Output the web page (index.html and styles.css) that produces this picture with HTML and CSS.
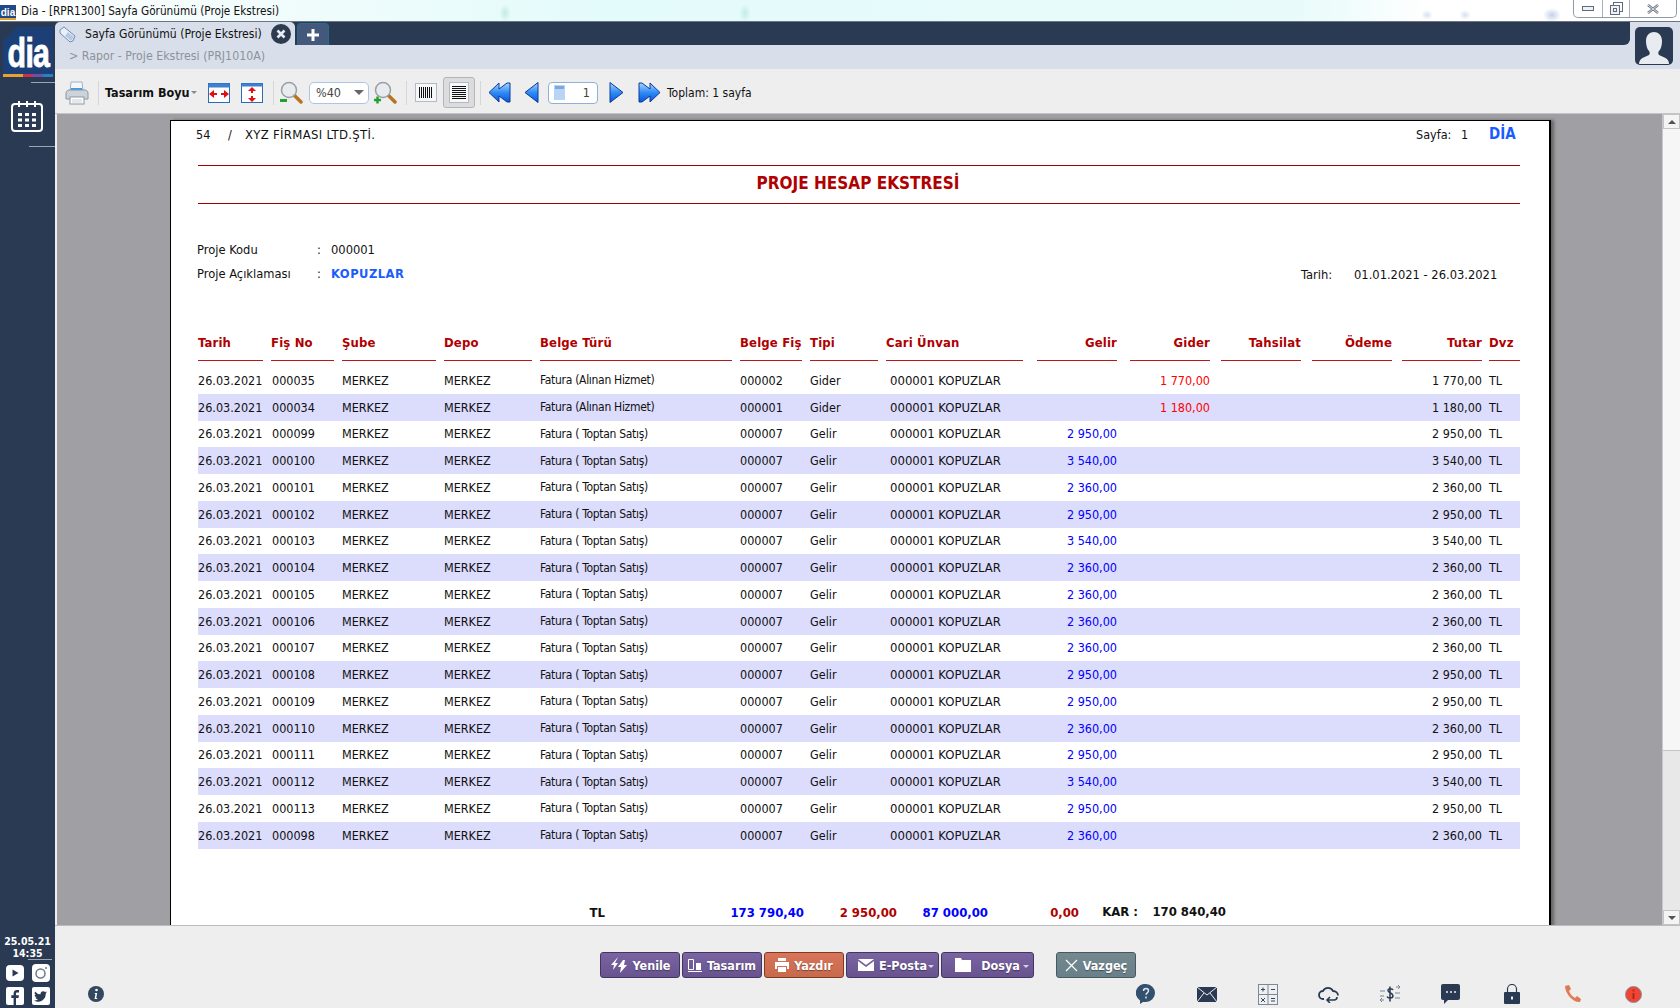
FILE: index.html
```html
<!DOCTYPE html>
<html lang="tr">
<head>
    <meta charset="UTF-8">
    <title>Dia - [RPR1300] Sayfa Görünümü (Proje Ekstresi)</title>
    <link rel="stylesheet" href="styles.css">
</head>
<body>
    <!-- TITLE BAR -->
    <div class="title-bar">
        <span class="app-icon">dia</span>
        <span class="title-text">Dia - [RPR1300] Sayfa Görünümü (Proje Ekstresi)</span>
        <div class="win-controls">
            <span class="win-btn win-min"><svg width="12" height="6"><rect x="0.5" y="0.5" width="11" height="4" fill="#eef2f6" stroke="#5d6b7a"/></svg></span>
            <span class="win-btn win-max"><svg width="13" height="13"><rect x="3.5" y="0.5" width="9" height="9" fill="none" stroke="#5d6b7a"/><rect x="0.5" y="3.5" width="9" height="9" fill="#eef2f6" stroke="#5d6b7a"/><rect x="3.5" y="6.5" width="3" height="3" fill="none" stroke="#5d6b7a"/></svg></span>
            <span class="win-btn win-close"><svg width="12" height="10"><path d="M1 1l10 8M11 1L1 9" stroke="#6a7582" stroke-width="2.4"/><path d="M1 1l10 8M11 1L1 9" stroke="#f2f4f6" stroke-width="0.8"/></svg></span>
        </div>
    </div>

    <div class="app">
        <!-- SIDEBAR -->
        <aside class="sidebar">
            <div class="logo">
                <span class="logo-text">dia</span>
            </div>
            <div class="logo-strip"></div>
            <div class="side-line side-line-top"></div>
            <svg class="calendar" width="32" height="32" viewBox="0 0 32 32">
                <rect x="1" y="4" width="30" height="27" rx="3" fill="none" stroke="#fff" stroke-width="2"/>
                <path d="M8 1v6M16 1v6M24 1v6" stroke="#fff" stroke-width="2"/>
                <path d="M7 13h4v3H7zM14 13h4v3h-4zM21 13h4v3h-4zM7 18.500h4v3H7zM14 18.500h4v3h-4zM21 18.500h4v3h-4zM7 24h4v3H7zM14 24h4v3h-4zM21 24h4v3h-4z" fill="#fff"/>
            </svg>
            <div class="side-line side-line-mid"></div>
            <div class="side-bottom">
                <div class="clock">25.05.21<br>14:35</div>
                <div class="side-line side-line-clock"></div>
                <div class="social">
                    <svg width="18" height="16" viewBox="0 0 18 16"><rect width="18" height="16" rx="4" fill="#fff"/><path d="M6.500 4.500v7l6-3.500z" fill="#293a52"/></svg>
                    <svg width="18" height="18" viewBox="0 0 18 18"><rect width="18" height="18" rx="4" fill="#fff"/><circle cx="8.500" cy="9.500" r="4.500" fill="none" stroke="#6b7a8c" stroke-width="1.500"/><circle cx="14" cy="4" r="1" fill="#6b7a8c"/></svg>
                    <svg width="18" height="18" viewBox="0 0 18 18"><rect width="18" height="18" rx="2" fill="#fff"/><path d="M10 18v-7h2.500l.4-2.700H10V6.800c0-.8.3-1.300 1.300-1.300H13V3.100c-.4-.1-1.200-.1-2-.1-2 0-3.400 1.200-3.400 3.400v1.900H5.300V11h2.300v7z" fill="#293a52"/></svg>
                    <svg width="18" height="18" viewBox="0 0 18 18"><rect width="18" height="18" rx="2" fill="#fff"/><path d="M15 5.200c-.5.200-1 .4-1.500.4.500-.3 1-.8 1.200-1.400-.5.300-1.100.5-1.700.7A2.700 2.700 0 0 0 8.500 7.300 7.500 7.500 0 0 1 3 4.500a2.700 2.700 0 0 0 .8 3.600c-.4 0-.8-.1-1.200-.3 0 1.300.9 2.400 2.100 2.700-.4.100-.8.100-1.200 0 .3 1.100 1.300 1.800 2.500 1.900A5.400 5.400 0 0 1 2 13.500 7.600 7.600 0 0 0 13.700 6.800c.5-.4.900-1 1.300-1.600z" fill="#293a52"/></svg>
                </div>
            </div>
        </aside>

        <div class="workspace">
            <!-- TAB STRIP -->
            <div class="tab-row">
                <div class="tab-strip">
                    <div class="tab">
                        <svg class="tab-icon" width="17" height="17" viewBox="0 0 17 17"><path d="M5 1l11 9-2 5-3 1L1 7V4z" fill="#eaf0f8" stroke="#6f8ab5" stroke-linejoin="round"/><path d="M9 6l6 5-3 4-6-5z" fill="#b9c9e2"/></svg>
                        <span class="tab-label">Sayfa Görünümü (Proje Ekstresi)</span>
                        <svg class="tab-close" width="20" height="20" viewBox="0 0 20 20"><circle cx="10" cy="10" r="10" fill="#2c3b4f"/><path d="M6.500 6.500l7 7M13.500 6.500l-7 7" stroke="#e8ecf2" stroke-width="2.600"/></svg>
                    </div>
                    <div class="tab-add">
                        <svg width="14" height="14" viewBox="0 0 14 14"><path d="M7 1v12M1 7h12" stroke="#fff" stroke-width="3"/></svg>
                    </div>
                </div>
                <div class="profile">
                    <svg width="38" height="38" viewBox="0 0 38 38"><rect width="38" height="38" rx="5" fill="#293a52"/><path d="M4 37c0-6 6-7 10-9 1-1 1-3 0-4-2-2-3-6-3-10 0-6 4-9 8-9s8 3 8 9c0 4-1 8-3 10-1 1-1 3 0 4 4 2 10 3 10 9z" fill="#e8ecf0"/></svg>
                </div>
            </div>
            <div class="breadcrumb">&gt; Rapor - Proje Ekstresi (PRJ1010A)</div>

            <!-- TOOLBAR -->
            <div class="toolbar">
                <svg class="tool-print" width="24" height="24" viewBox="0 0 24 24"><path d="M6 1h11l1 9H5z" fill="#f4f8fc" stroke="#9fb0c4"/><path d="M6 7h11l1 4H5z" fill="#3f9ae8"/><path d="M1 12c0-2 2-3 3-3h16c1 0 3 1 3 3v6H1z" fill="#cdd3da" stroke="#8c96a3"/><rect x="5" y="16" width="14" height="7" fill="#fff" stroke="#8c96a3"/><path d="M7 19h10M7 21h10" stroke="#c9d0d8"/></svg>
                <span class="tool-sep tool-sep-1"></span>
                <span class="design-label">Tasarım Boyu</span>
                <span class="caret"></span>
                <svg class="tool-fit-w" width="22" height="20" viewBox="0 0 22 20"><rect x="0.500" y="0.500" width="21" height="19" fill="#fff" stroke="#2b6cb8"/><rect x="0.500" y="0.500" width="21" height="4" fill="#3f7fd0"/><path d="M1 11l5-4v8zM21 11l-5-4v8z" fill="#e01010"/><path d="M6 10h3v2H6zM13 10h3v2h-3z" fill="#e01010"/></svg>
                <svg class="tool-fit-h" width="22" height="20" viewBox="0 0 22 20"><rect x="0.500" y="0.500" width="21" height="19" fill="#fff" stroke="#2b6cb8"/><rect x="0.500" y="0.500" width="21" height="3" fill="#3f7fd0"/><path d="M11 4l4 4H7zM11 19l4-4H7z" fill="#e01010"/><path d="M10 8h2v2h-2zM10 13h2v2h-2z" fill="#e01010"/></svg>
                <span class="tool-sep tool-sep-2"></span>
                <svg class="tool-zoom-out" width="23" height="23" viewBox="0 0 23 23"><path d="M13 13l8 8" stroke="#b8741f" stroke-width="3.500" stroke-linecap="round"/><circle cx="9" cy="9" r="7.500" fill="#e8ecef" stroke="#9aa0a6" stroke-width="1.500"/><rect x="0" y="18" width="7" height="3" fill="#22a030"/></svg>
                <div class="zoom-select">
                    <span>%40</span>
                    <span class="select-arrow"></span>
                </div>
                <svg class="tool-zoom-in" width="23" height="23" viewBox="0 0 23 23"><path d="M13 13l8 8" stroke="#b8741f" stroke-width="3.500" stroke-linecap="round"/><circle cx="9" cy="9" r="7.500" fill="#e8ecef" stroke="#9aa0a6" stroke-width="1.500"/><path d="M0 19h7M3.500 15.500v7" stroke="#22a030" stroke-width="2.400"/></svg>
                <span class="tool-sep tool-sep-3"></span>
                <svg class="tool-bars" width="22" height="19" viewBox="0 0 22 19"><rect x="0.500" y="0.500" width="21" height="18" fill="#f6f7f9" stroke="#b4bac2"/><path d="M4.500 4v11M6.500 4v11M8.500 4v11M10.500 4v11M12.500 4v11M14.500 4v11M16.500 4v11" stroke="#111"/></svg>
                <div class="tool-active">
                    <svg width="20" height="21" viewBox="0 0 20 21"><rect x="0.500" y="0.500" width="19" height="20" fill="#f6f7f9" stroke="#b4bac2"/><path d="M3 4.500h14M3 6.500h14M3 8.500h14M3 10.500h14M3 12.500h14M3 14.500h14M3 16.500h14" stroke="#111"/></svg>
                </div>
                <span class="tool-sep tool-sep-4"></span>
                <svg class="nav-first" width="23" height="23" viewBox="0 0 23 23"><defs><linearGradient id="navBlue" x1="0" y1="0" x2="0" y2="1"><stop offset="0" stop-color="#a8d4ff"/><stop offset="0.500" stop-color="#2f8cf5"/><stop offset="1" stop-color="#0a55d8"/></linearGradient></defs><path d="M11 2L1 11.500 11 21V15l8 6h3V2h-3l-8 6z" fill="url(#navBlue)" stroke="#0b3a9c" stroke-linejoin="round"/></svg>
                <svg class="nav-prev" width="16" height="23" viewBox="0 0 16 23"><path d="M14 1.500v20L1 11.500z" fill="url(#navBlue)" stroke="#0b3a9c" stroke-linejoin="round"/></svg>
                <div class="page-input">
                    <svg width="11" height="15" viewBox="0 0 11 15"><rect width="11" height="15" fill="#b9d4f4"/><rect x="1" y="1" width="9" height="3" fill="#7ea8da"/></svg>
                    <span>1</span>
                </div>
                <svg class="nav-next" width="16" height="23" viewBox="0 0 16 23"><path d="M2 1.500v20l13-10z" fill="url(#navBlue)" stroke="#0b3a9c" stroke-linejoin="round"/></svg>
                <svg class="nav-last" width="23" height="23" viewBox="0 0 23 23"><path d="M12 2l10 9.500L12 21V15l-8 6H1V2h3l8 6z" fill="url(#navBlue)" stroke="#0b3a9c" stroke-linejoin="round"/></svg>
                <span class="total-pages">Toplam: 1 sayfa</span>
            </div>

            <!-- REPORT VIEWER -->
            <div class="viewer">
                <div class="canvas">
                    <div class="page">
                        <div class="page-head">
                            <span class="head-no">54</span>
                            <span class="head-slash">/</span>
                            <span class="head-firm">XYZ FİRMASI LTD.ŞTİ.</span>
                            <span class="head-sayfa">Sayfa:</span>
                            <span class="head-num">1</span>
                            <span class="head-dia">DİA</span>
                        </div>
                        <h1 class="report-title">PROJE HESAP EKSTRESİ</h1>

                        <div class="info-row">
                            <span class="info-label">Proje Kodu</span>
                            <span class="info-colon">:</span>
                            <span>000001</span>
                        </div>
                        <div class="info-row">
                            <span class="info-label">Proje Açıklaması</span>
                            <span class="info-colon">:</span>
                            <span class="info-strong">KOPUZLAR</span>
                            <span class="info-date-label">Tarih:</span>
                            <span class="info-date">01.01.2021 - 26.03.2021</span>
                        </div>

                        <div class="report-head">
                            <span>Tarih</span>
                            <span>Fiş No</span>
                            <span>Şube</span>
                            <span>Depo</span>
                            <span>Belge Türü</span>
                            <span>Belge Fiş</span>
                            <span>Tipi</span>
                            <span class="head-cari">Cari Ünvan</span>
                            <span class="num">Gelir</span>
                            <span class="num">Gider</span>
                            <span class="num">Tahsilat</span>
                            <span class="num">Ödeme</span>
                            <span class="num">Tutar</span>
                            <span class="head-dvz">Dvz</span>
                        </div>

                        <div class="report-row"><span>26.03.2021</span><span class="fis">000035</span><span>MERKEZ</span><span>MERKEZ</span><span class="doc">Fatura (Alınan Hizmet)</span><span>000002</span><span>Gider</span><span class="cari">000001 KOPUZLAR</span><span></span><span class="num expense">1 770,00</span><span></span><span></span><span class="num">1 770,00</span><span class="dvz">TL</span></div>
                        <div class="report-row"><span>26.03.2021</span><span class="fis">000034</span><span>MERKEZ</span><span>MERKEZ</span><span class="doc">Fatura (Alınan Hizmet)</span><span>000001</span><span>Gider</span><span class="cari">000001 KOPUZLAR</span><span></span><span class="num expense">1 180,00</span><span></span><span></span><span class="num">1 180,00</span><span class="dvz">TL</span></div>
                        <div class="report-row"><span>26.03.2021</span><span class="fis">000099</span><span>MERKEZ</span><span>MERKEZ</span><span class="doc">Fatura ( Toptan Satış)</span><span>000007</span><span>Gelir</span><span class="cari">000001 KOPUZLAR</span><span class="num income">2 950,00</span><span></span><span></span><span></span><span class="num">2 950,00</span><span class="dvz">TL</span></div>
                        <div class="report-row"><span>26.03.2021</span><span class="fis">000100</span><span>MERKEZ</span><span>MERKEZ</span><span class="doc">Fatura ( Toptan Satış)</span><span>000007</span><span>Gelir</span><span class="cari">000001 KOPUZLAR</span><span class="num income">3 540,00</span><span></span><span></span><span></span><span class="num">3 540,00</span><span class="dvz">TL</span></div>
                        <div class="report-row"><span>26.03.2021</span><span class="fis">000101</span><span>MERKEZ</span><span>MERKEZ</span><span class="doc">Fatura ( Toptan Satış)</span><span>000007</span><span>Gelir</span><span class="cari">000001 KOPUZLAR</span><span class="num income">2 360,00</span><span></span><span></span><span></span><span class="num">2 360,00</span><span class="dvz">TL</span></div>
                        <div class="report-row"><span>26.03.2021</span><span class="fis">000102</span><span>MERKEZ</span><span>MERKEZ</span><span class="doc">Fatura ( Toptan Satış)</span><span>000007</span><span>Gelir</span><span class="cari">000001 KOPUZLAR</span><span class="num income">2 950,00</span><span></span><span></span><span></span><span class="num">2 950,00</span><span class="dvz">TL</span></div>
                        <div class="report-row"><span>26.03.2021</span><span class="fis">000103</span><span>MERKEZ</span><span>MERKEZ</span><span class="doc">Fatura ( Toptan Satış)</span><span>000007</span><span>Gelir</span><span class="cari">000001 KOPUZLAR</span><span class="num income">3 540,00</span><span></span><span></span><span></span><span class="num">3 540,00</span><span class="dvz">TL</span></div>
                        <div class="report-row"><span>26.03.2021</span><span class="fis">000104</span><span>MERKEZ</span><span>MERKEZ</span><span class="doc">Fatura ( Toptan Satış)</span><span>000007</span><span>Gelir</span><span class="cari">000001 KOPUZLAR</span><span class="num income">2 360,00</span><span></span><span></span><span></span><span class="num">2 360,00</span><span class="dvz">TL</span></div>
                        <div class="report-row"><span>26.03.2021</span><span class="fis">000105</span><span>MERKEZ</span><span>MERKEZ</span><span class="doc">Fatura ( Toptan Satış)</span><span>000007</span><span>Gelir</span><span class="cari">000001 KOPUZLAR</span><span class="num income">2 360,00</span><span></span><span></span><span></span><span class="num">2 360,00</span><span class="dvz">TL</span></div>
                        <div class="report-row"><span>26.03.2021</span><span class="fis">000106</span><span>MERKEZ</span><span>MERKEZ</span><span class="doc">Fatura ( Toptan Satış)</span><span>000007</span><span>Gelir</span><span class="cari">000001 KOPUZLAR</span><span class="num income">2 360,00</span><span></span><span></span><span></span><span class="num">2 360,00</span><span class="dvz">TL</span></div>
                        <div class="report-row"><span>26.03.2021</span><span class="fis">000107</span><span>MERKEZ</span><span>MERKEZ</span><span class="doc">Fatura ( Toptan Satış)</span><span>000007</span><span>Gelir</span><span class="cari">000001 KOPUZLAR</span><span class="num income">2 360,00</span><span></span><span></span><span></span><span class="num">2 360,00</span><span class="dvz">TL</span></div>
                        <div class="report-row"><span>26.03.2021</span><span class="fis">000108</span><span>MERKEZ</span><span>MERKEZ</span><span class="doc">Fatura ( Toptan Satış)</span><span>000007</span><span>Gelir</span><span class="cari">000001 KOPUZLAR</span><span class="num income">2 950,00</span><span></span><span></span><span></span><span class="num">2 950,00</span><span class="dvz">TL</span></div>
                        <div class="report-row"><span>26.03.2021</span><span class="fis">000109</span><span>MERKEZ</span><span>MERKEZ</span><span class="doc">Fatura ( Toptan Satış)</span><span>000007</span><span>Gelir</span><span class="cari">000001 KOPUZLAR</span><span class="num income">2 950,00</span><span></span><span></span><span></span><span class="num">2 950,00</span><span class="dvz">TL</span></div>
                        <div class="report-row"><span>26.03.2021</span><span class="fis">000110</span><span>MERKEZ</span><span>MERKEZ</span><span class="doc">Fatura ( Toptan Satış)</span><span>000007</span><span>Gelir</span><span class="cari">000001 KOPUZLAR</span><span class="num income">2 360,00</span><span></span><span></span><span></span><span class="num">2 360,00</span><span class="dvz">TL</span></div>
                        <div class="report-row"><span>26.03.2021</span><span class="fis">000111</span><span>MERKEZ</span><span>MERKEZ</span><span class="doc">Fatura ( Toptan Satış)</span><span>000007</span><span>Gelir</span><span class="cari">000001 KOPUZLAR</span><span class="num income">2 950,00</span><span></span><span></span><span></span><span class="num">2 950,00</span><span class="dvz">TL</span></div>
                        <div class="report-row"><span>26.03.2021</span><span class="fis">000112</span><span>MERKEZ</span><span>MERKEZ</span><span class="doc">Fatura ( Toptan Satış)</span><span>000007</span><span>Gelir</span><span class="cari">000001 KOPUZLAR</span><span class="num income">3 540,00</span><span></span><span></span><span></span><span class="num">3 540,00</span><span class="dvz">TL</span></div>
                        <div class="report-row"><span>26.03.2021</span><span class="fis">000113</span><span>MERKEZ</span><span>MERKEZ</span><span class="doc">Fatura ( Toptan Satış)</span><span>000007</span><span>Gelir</span><span class="cari">000001 KOPUZLAR</span><span class="num income">2 950,00</span><span></span><span></span><span></span><span class="num">2 950,00</span><span class="dvz">TL</span></div>
                        <div class="report-row"><span>26.03.2021</span><span class="fis">000098</span><span>MERKEZ</span><span>MERKEZ</span><span class="doc">Fatura ( Toptan Satış)</span><span>000007</span><span>Gelir</span><span class="cari">000001 KOPUZLAR</span><span class="num income">2 360,00</span><span></span><span></span><span></span><span class="num">2 360,00</span><span class="dvz">TL</span></div>

                        <div class="totals">
                            <span class="tot-cur">TL</span>
                            <span class="tot-gelir">173 790,40</span>
                            <span class="tot-gider">2 950,00</span>
                            <span class="tot-tahsilat">87 000,00</span>
                            <span class="tot-odeme">0,00</span>
                            <span class="tot-kar">KAR :</span>
                            <span class="tot-karval">170 840,40</span>
                        </div>
                    </div>
                </div>
                <div class="scrollbar">
                    <span class="scroll-btn"><i class="arrow-up"></i></span>
                    <span class="scroll-thumb"></span>
                    <span class="scroll-track"></span>
                    <span class="scroll-btn"><i class="arrow-down"></i></span>
                </div>
            </div>

            <!-- BOTTOM BAR -->
            <div class="bottom-bar">
                <div class="actions">
                    <a class="btn"><svg width="18" height="16" viewBox="0 0 18 16"><path d="M8 0L1 8h3l-1 5 5-7H5zM13 3l-5 7h3l-1 6 7-8h-3l1-5z" fill="#fff"/></svg>Yenile</a>
                    <a class="btn"><svg width="14" height="13" viewBox="0 0 14 13"><path d="M0.500 0.500h5v10h-5zM0 12.500h14" fill="none" stroke="#fff"/><rect x="8" y="4" width="5" height="7" fill="#fff"/></svg>Tasarım</a>
                    <a class="btn btn-print"><svg width="14" height="14" viewBox="0 0 14 14"><path d="M3 0h8v3H3zM0 4h14v7h-2V8H2v3H0zM3 9h8v5H3z" fill="#fff"/></svg>Yazdır</a>
                    <a class="btn btn-wide"><svg width="16" height="12" viewBox="0 0 16 12"><path d="M0 0h16L8 6zM0 2v10h16V2L8 8z" fill="#fff"/></svg>E-Posta<i class="btn-caret"></i></a>
                    <a class="btn btn-wide btn-file"><svg width="16" height="14" viewBox="0 0 16 14"><path d="M0 0h6l1 2h9v12H0z" fill="#fff"/></svg>Dosya<i class="btn-caret"></i></a>
                    <a class="btn btn-cancel"><svg width="13" height="13" viewBox="0 0 13 13"><path d="M1 1l11 11M12 1L1 12" stroke="#fff" stroke-width="1.200"/></svg>Vazgeç</a>
                </div>
                <div class="status-row">
                    <svg class="status-info" width="16" height="16" viewBox="0 0 16 16"><circle cx="8" cy="8" r="8" fill="#33475f"/><circle cx="8.500" cy="4" r="1.300" fill="#fff"/><path d="M7 7h2.200l-1 5h1v1H6.500l1-5h-1z" fill="#fff"/></svg>
                    <div class="status-icons">
                        <span class="status-icon"><svg width="20" height="20" viewBox="0 0 20 20"><path d="M10 0a9 9 0 0 1 0 18H7l-3 2v-3.500A9 9 0 0 1 10 0z" fill="#33506e"/><path d="M7.500 7c0-1.500 1-2.500 2.500-2.500s2.500 1 2.500 2.300c0 2-2.500 2-2.500 4M10 12.500v2" fill="none" stroke="#dfe4ea" stroke-width="1.500"/></svg></span>
                        <span class="status-icon"><svg width="20" height="15" viewBox="0 0 20 15"><rect width="20" height="15" fill="#293a52"/><path d="M0 0l10 8 10-8M0 15l7-9M20 15l-7-9" fill="none" stroke="#eeeeef" stroke-width="1"/></svg></span>
                        <span class="status-icon"><svg width="20" height="21" viewBox="0 0 20 21"><rect x="0.500" y="0.500" width="19" height="20" fill="#eef0f2" stroke="#7d8896"/><path d="M10 0v21M0 10.500h20" stroke="#7d8896"/><path d="M3 5.500h4M5 3.500v4M13 5.500h4M3 14l4 4M7 14l-4 4M13 14.500h4M13 17h4" stroke="#33475f"/></svg></span>
                        <span class="status-icon"><svg width="21" height="17" viewBox="0 0 21 17"><path d="M6 13H5a4 4 0 0 1 0-8 5.500 5.500 0 0 1 10 0c3 0 5 2 5 4.500" fill="none" stroke="#293a52" stroke-width="1.800"/><path d="M19 11c0 2-1 3-3 3h-6M12 11l-3 3 3 3" fill="none" stroke="#293a52" stroke-width="1.600"/></svg></span>
                        <span class="status-icon"><svg width="20" height="18" viewBox="0 0 20 18"><path d="M13 5c-.5-1.500-5-2-5 .5C8 8 13 7.500 13 11c0 2.500-5 2.500-6 .5M10 1.500v15" fill="none" stroke="#293a52" stroke-width="1.500"/><path d="M0 6h5M16 2h4M18 0l2 2-2 2M15 8h5M0 11h4M0 15h4M2 13l-2 2 2 2M15 13h5" fill="none" stroke="#7d8896"/></svg></span>
                        <span class="status-icon"><svg width="19" height="20" viewBox="0 0 19 20"><path d="M2 0h15a2 2 0 0 1 2 2v12a2 2 0 0 1-2 2H7l-4 4v-4H2a2 2 0 0 1-2-2V2a2 2 0 0 1 2-2z" fill="#293a52"/><path d="M5 8h2M9 8h2M13 8h2" stroke="#eeeeef" stroke-width="1.600"/></svg></span>
                        <span class="status-icon"><svg width="16" height="20" viewBox="0 0 16 20"><rect y="8" width="16" height="12" rx="1" fill="#293a52"/><path d="M3.500 8V5a4.500 4.500 0 0 1 9 0v3" fill="none" stroke="#293a52" stroke-width="1.200"/><rect x="7" y="12.500" width="2" height="3" fill="#eeeeef"/></svg></span>
                        <span class="status-icon"><svg width="17" height="18" viewBox="0 0 17 18"><path d="M1 1l4-1 2 4-2 2c1 3 3 5 6 7l2-2 4 3-1 3c-6 1-15-8-15-16z" fill="#e07a52"/></svg></span>
                        <span class="status-icon"><svg width="17" height="17" viewBox="0 0 17 17"><circle cx="8.500" cy="8.500" r="8" fill="#ee4535" stroke="#8a8f96"/><path d="M8.500 7v6" stroke="#a82a20" stroke-width="2"/><circle cx="8.500" cy="4.500" r="1" fill="#a82a20"/></svg></span>
                    </div>
                </div>
            </div>
        </div>
    </div>
</body>
</html>
```

FILE: styles.css
```css
* {
    box-sizing: border-box;
}

html, body {
    margin: 0;
    height: 100%;
    overflow: hidden;
}

body {
    width: 1680px;
    height: 1008px;
    display: flex;
    flex-direction: column;
    font-family: "DejaVu Sans", "Liberation Sans", sans-serif;
    font-stretch: condensed;
    font-size: 12.5px;
    color: #111;
    background: #eeeeef;
}

/* Title bar */
.title-bar {
    display: flex;
    align-items: flex-start;
    height: 22px;
    flex: none;
    border-bottom: 1px solid #6d7680;
    background:
        radial-gradient(ellipse 9px 7px at 1552px 15px, #c4d0e8, transparent),
        radial-gradient(ellipse 6px 5px at 1465px 15px, #d6e2f2, transparent),
        radial-gradient(ellipse 6px 5px at 1427px 15px, #d6e2f2, transparent),
        radial-gradient(ellipse 6px 9px at 505px 13px, #c4ece2, transparent),
        radial-gradient(ellipse 6px 9px at 745px 13px, #c4ece2, transparent),
        linear-gradient(90deg, #fff 0, #f4fcfc 200px, #e4fbfb 600px, #e8fbfa 1300px, #fff 1430px);
}

.app-icon {
    width: 16px;
    height: 15px;
    margin-top: 5px;
    background: #1f4a86;
    color: #fff;
    font-family: "Liberation Sans", sans-serif;
    font-stretch: normal;
    font-size: 10px;
    font-weight: 700;
    line-height: 15px;
    text-align: center;
    border-bottom: 2px solid #e8a030;
}

.title-text {
    margin: 3px 0 0 5px;
    font-size: 11.7px;
    line-height: 16px;
}

.win-controls {
    display: flex;
    margin-left: auto;
    margin-right: 3px;
    height: 18px;
    border: 1px solid #8e9ba8;
    border-top: none;
    border-radius: 0 0 5px 5px;
    background: rgba(255, 255, 255, 0.5);
}

.win-btn {
    display: flex;
    align-items: center;
    justify-content: center;
    border-left: 1px solid #a8b2bc;
}

.win-min {
    width: 28px;
    border-left: none;
}

.win-max {
    width: 27px;
}

.win-close {
    width: 47px;
}

/* Main frame */
.app {
    display: flex;
    flex: 1;
    min-height: 0;
}

.sidebar {
    width: 55px;
    flex: none;
    display: flex;
    flex-direction: column;
    background: #293a52;
    padding-top: 5px;
}

.logo {
    width: 50px;
    height: 47px;
    margin-left: 3px;
    background: #1c3f78;
    clip-path: polygon(14px 0, 100% 0, 100% 100%, 0 100%, 0 14px);
    display: flex;
    align-items: flex-end;
    justify-content: center;
    overflow: hidden;
}

.logo-text {
    color: #fff;
    font-family: "Liberation Sans", sans-serif;
    font-stretch: normal;
    font-size: 40px;
    font-weight: 700;
    line-height: 42px;
    letter-spacing: -1px;
    transform: scaleX(0.76);
    -webkit-text-stroke: 0.8px #fff;
}

.logo-strip {
    width: 50px;
    height: 3px;
    margin-left: 3px;
    background: linear-gradient(90deg, #e8a030 0 40%, #c83050 40% 60%, #7050a0 60% 80%, #2a80c8 80%);
}

.side-line {
    height: 1px;
    background: #9aa4b2;
    margin-left: auto;
}

.side-line-top {
    width: 24px;
    margin-top: 5px;
}

.calendar {
    margin: 17px 0 0 11px;
}

.side-line-mid {
    width: 26px;
    margin-top: 14px;
}

.side-bottom {
    margin-top: auto;
}

.clock {
    color: #fff;
    font-family: "DejaVu Sans", sans-serif;
    font-size: 10.500px;
    font-weight: 700;
    line-height: 12px;
    text-align: center;
}

.side-line-clock {
    width: 24px;
    margin: 0 3px 4px auto;
}

.social {
    display: grid;
    grid-template-columns: 18px 18px;
    column-gap: 8px;
    row-gap: 5px;
    padding: 0 0 3px 6px;
    align-items: center;
}

.workspace {
    flex: 1;
    min-width: 0;
    display: flex;
    flex-direction: column;
}

/* Tabs */
.tab-row {
    display: flex;
    height: 23px;
    flex: none;
    background: #d8dfea;
    position: relative;
}

.tab-strip {
    width: 1575px;
    display: flex;
    background: #293a52;
    border-radius: 0 0 6px 0;
}

.tab {
    width: 240px;
    display: flex;
    align-items: center;
    background: #d8dfea;
    border-radius: 5px 5px 0 0;
    padding: 1px 0 0 4px;
}

.tab-label {
    margin-left: 9px;
    font-size: 12.100px;
    white-space: nowrap;
}

.tab-close {
    position: absolute;
    left: 216px;
    top: 2px;
}

.tab-add {
    width: 32px;
    height: 22px;
    margin: 1px 0 0 2px;
    display: flex;
    align-items: center;
    justify-content: center;
    background: #42597c;
    border: 1px solid #2a6a90;
    border-bottom: none;
    border-radius: 4px 4px 0 0;
}

/* over the strip and breadcrumb */
.profile {
    position: absolute;
    left: 1580px;
    top: 5px;
    height: 38px;
}

.breadcrumb {
    height: 24px;
    flex: none;
    padding-left: 14px;
    background: #d8dfea;
    color: #8d929b;
    font-size: 12.300px;
    line-height: 22px;
}

/* Toolbar */
.toolbar {
    height: 45px;
    flex: none;
    display: flex;
    align-items: center;
    background: #eeeeef;
    border-bottom: 1px solid #c4c4c6;
    padding: 3px 0 0 10px;
}

.tool-sep {
    width: 1px;
    height: 24px;
    background: #d5d6d8;
}

.tool-sep-1 {
    margin-left: 9px;
}

.design-label {
    margin-left: 6px;
    font-weight: 700;
    font-size: 12.500px;
    width: 82px;
    white-space: nowrap;
}

.caret {
    width: 0;
    height: 0;
    margin-left: 4px;
    border: 3px solid transparent;
    border-top: 3px solid #888;
    border-bottom: none;
}

.tool-fit-w {
    margin-left: 11px;
}

.tool-fit-h {
    margin-left: 11px;
}

.tool-sep-2 {
    margin-left: 10px;
}

.tool-zoom-out {
    margin-left: 6px;
}

.zoom-select {
    width: 60px;
    height: 22px;
    margin-left: 6px;
    display: flex;
    align-items: center;
    justify-content: space-between;
    padding: 0 4px 0 6px;
    background: #fff;
    border: 1px solid #a9c6e8;
    border-radius: 5px;
    color: #444;
}

.select-arrow {
    width: 0;
    height: 0;
    border: 5px solid transparent;
    border-top: 5px solid #666;
    border-bottom: none;
}

.tool-zoom-in {
    margin-left: 5px;
}

.tool-sep-3 {
    margin-left: 9px;
}

.tool-bars {
    margin-left: 8px;
}

.tool-active {
    width: 32px;
    height: 31px;
    margin-left: 6px;
    display: flex;
    align-items: center;
    justify-content: center;
    background: #dcdcde;
    border: 1px solid #b4b5b8;
    border-radius: 3px;
}

.tool-sep-4 {
    margin-left: 5px;
}

.nav-first {
    margin-left: 7px;
}

.nav-prev {
    margin-left: 13px;
}

.page-input {
    width: 50px;
    height: 22px;
    margin-left: 8px;
    display: flex;
    align-items: center;
    justify-content: space-between;
    padding: 0 7px 0 5px;
    background: #fff;
    border: 1px solid #8fb0d8;
    border-radius: 4px;
    color: #444;
}

.nav-next {
    margin-left: 10px;
}

.nav-last {
    margin-left: 14px;
}

.total-pages {
    margin-left: 6px;
    font-size: 12px;
}

/* Report viewer */
.viewer {
    flex: 1;
    min-height: 0;
    display: flex;
    border-bottom: 1px solid #bcbcbe;
}

.canvas {
    flex: 1;
    min-width: 0;
    overflow: hidden;
    margin-left: 2px;
    padding: 6px 0 0 113px;
    background: #a09fa3;
}

.page {
    width: 1381px;
    height: 900px;
    padding: 0 29px 0 27px;
    background: #fff;
    border: 1px solid #000;
    border-width: 1px 2px 0 1px;
    box-shadow: 3px 0 3px #666;
}

.page-head {
    display: flex;
    align-items: center;
    height: 26px;
}

.head-no {
    margin-left: -2px;
    width: 32px;
}

.head-slash {
    width: 17px;
}

.head-firm {
    width: 1171px;
    font-size: 13px;
    letter-spacing: 0.3px;
}

.head-sayfa {
    width: 45px;
}

.head-num {
    width: 28px;
}

.head-dia {
    color: #1a5cff;
    font-size: 15px;
    font-weight: 700;
}

.report-title {
    margin: 18px 0 0;
    height: 39px;
    border-top: 1px solid #a00000;
    border-bottom: 1px solid #a00000;
    color: #b00000;
    font-size: 17px;
    font-weight: 700;
    line-height: 34px;
    text-align: center;
    padding-right: 2px;
}

.info-row {
    display: flex;
    align-items: center;
    height: 24px;
    font-size: 12.800px;
}

.report-title + .info-row {
    margin-top: 33px;
}

.info-label {
    width: 120px;
    margin-left: -1px;
}

.info-colon {
    width: 14px;
}

.info-strong {
    width: 970px;
    color: #1a5cff;
    font-weight: 700;
    letter-spacing: 0.5px;
}

.info-date-label, .info-date {
    padding-top: 2px;
}

.info-date-label {
    width: 53px;
}

/* Report table */
.report-head, .report-row {
    display: grid;
    grid-template-columns: 73px 71px 102px 96px 200px 70px 76px 144px 87px 93px 91px 91px 90px 38px;
    width: 1322px;
}

.report-head {
    margin: 49px 0 6px;
    color: #b00000;
    font-size: 13px;
    font-weight: 700;
    letter-spacing: 0.15px;
}

.report-head span {
    margin-right: 8px;
    padding-bottom: 8px;
    line-height: 18px;
    border-bottom: 1px solid #b81818;
}

.report-head .head-cari {
    margin-right: 7px;
}

.report-head .num {
    margin: 0;
    justify-self: end;
    width: 80px;
    text-align: right;
}

.report-head .head-dvz {
    margin: 0 0 0 7px;
}

.report-row {
    height: 26.750px;
    align-items: center;
}

.report-row:nth-child(odd) {
    background: #dcdcfc;
}

.fis {
    padding-left: 1px;
}

.doc {
    font-size: 12px;
    letter-spacing: -0.3px;
}

.cari {
    margin-left: 4px;
    font-size: 13px;
}

.num {
    text-align: right;
}

.income {
    color: #0000ff;
}

.expense {
    color: #ff0000;
}

.dvz {
    margin-left: 7px;
}

.totals {
    display: flex;
    align-items: center;
    height: 20px;
    margin-top: 54px;
    font-size: 13px;
    font-weight: 700;
}

.totals span {
    flex: none;
    text-align: right;
}

.tot-cur {
    width: 407px;
}

.tot-gelir {
    width: 199px;
    color: #0000ff;
}

.tot-gider {
    width: 93px;
    color: #b00000;
}

.tot-tahsilat {
    width: 91px;
    color: #0000ff;
}

.tot-odeme {
    width: 91px;
    color: #b00000;
}

.tot-kar {
    width: 59px;
    margin-top: -3px;
}

.tot-karval {
    width: 88px;
    margin-top: -3px;
}

/* Scrollbar */
.scrollbar {
    width: 18px;
    flex: none;
    display: flex;
    flex-direction: column;
    background: #e8e8e9;
    border-left: 1px solid #c8c8ca;
}

.scroll-btn {
    height: 15px;
    flex: none;
    display: flex;
    align-items: center;
    justify-content: center;
    background: #f4f4f5;
    border: 1px solid #c4c4c6;
}

.arrow-up, .arrow-down {
    width: 0;
    height: 0;
    border: 4px solid transparent;
}

.arrow-up {
    border-bottom: 4px solid #555;
    border-top: none;
}

.arrow-down {
    border-top: 4px solid #555;
    border-bottom: none;
}

.scroll-thumb {
    height: 622px;
    flex: none;
    background: #f6f6f7;
    border-bottom: 1px solid #c4c4c6;
}

.scroll-track {
    flex: 1;
}

/* Bottom bar */
.bottom-bar {
    height: 82px;
    flex: none;
    background: #eeeeef;
}

.actions {
    display: flex;
    gap: 2px;
    padding: 26px 0 0 545px;
}

.btn {
    width: 80px;
    height: 26px;
    display: flex;
    align-items: center;
    justify-content: center;
    gap: 5px;
    position: relative;
    color: #fff;
    font-size: 12.500px;
    font-weight: 700;
    background: linear-gradient(#7a64a2, #68538f);
    border: 1px solid #40365f;
    border-radius: 3px;
    text-shadow: 0 1px 1px rgba(0, 0, 0, 0.4);
}

.btn-print {
    background: linear-gradient(#d8745a, #c76a4c);
    border-color: #7f3a22;
}

.btn-wide {
    width: 93px;
}

.btn-file {
    gap: 10px;
}

.btn-caret {
    position: absolute;
    right: 4px;
    top: 12px;
    border: 3px solid transparent;
    border-top: 3px solid #d8d0e4;
    border-bottom: none;
}

.btn-cancel {
    margin-left: 20px;
    background: linear-gradient(#74898f, #69808a);
    border-color: #47585f;
}

.status-row {
    display: flex;
    align-items: center;
    height: 30px;
    margin-top: 1px;
    padding-left: 33px;
}

.status-icons {
    display: flex;
    margin-left: 1011px;
}

.status-icon {
    width: 61px;
    display: flex;
    align-items: center;
    justify-content: center;
}
```
